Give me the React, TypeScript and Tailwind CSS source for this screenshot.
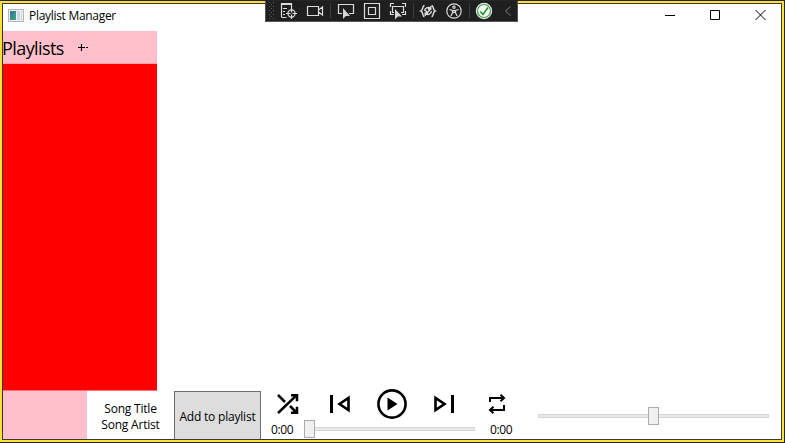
import type { ReactNode } from 'react';

const UI_FONT = "font-['Open_Sans','Noto_Sans',sans-serif]";

function ToolIcon({ children, className = '' }: { children: ReactNode; className?: string }) {
  return (
    <svg width="18" height="18" viewBox="0 0 18 18" fill="none" stroke="#dcdcdc" strokeWidth="1.2" className={`shrink-0 ${className}`}>
      {children}
    </svg>
  );
}

function Separator({ className = '' }: { className?: string }) {
  return <div className={`h-[14px] w-px shrink-0 bg-[#3d3d3d] ${className}`} />;
}

function DebugToolbar() {
  return (
    <div className="absolute left-[265px] top-[-1px] flex h-[22px] w-[253px] items-center border border-t-0 border-[#555555] bg-[#1f1f1f]">
      <svg width="5" height="17" viewBox="0 0 5 17" fill="#5c5c5c" className="ml-[3px] shrink-0">
        {[0, 4, 8, 12, 16].map((y) => (
          <g key={y}>
            <rect x="0" y={y} width="1" height="1" />
            <rect x="4" y={y} width="1" height="1" />
            <rect x="2" y={y + 2} width="1" height="1" />
          </g>
        ))}
      </svg>
      <ToolIcon className="ml-[6px]">
        <path d="M1.5 15V1.5h10V6M1 2.5h11" />
        <path d="M1 2h11" strokeWidth="2" />
        <path d="M3 6.5h4M3 9.5h2M3 12.500h2M1.500 15.500h5" />
        <circle cx="11.500" cy="11.500" r="3.600" />
        <path d="M11.500 6v4.500M11.500 12.500V17M6 11.500h4.500M12.500 11.500H17" />
      </ToolIcon>
      <ToolIcon className="ml-[8px]">
        <path d="M1.500 4.500h11v9h-11z M12.500 8l4-3v8l-4-3" />
      </ToolIcon>
      <Separator className="ml-[6px]" />
      <ToolIcon className="ml-[6px]">
        <path d="M5 11.500H1.500v-9h15v9H12" />
        <path d="M6 6v11l2.800-3H13z" fill="#d6d6d6" stroke="none" />
      </ToolIcon>
      <ToolIcon className="ml-[8px]">
        <path d="M1.500 1.500h15v15h-15zM5.500 5.500h7v7h-7z" />
      </ToolIcon>
      <ToolIcon className="ml-[8px]">
        <path d="M1.500 5V1.500H5M13 1.500h3.500V5M1.500 9v3.500H5M13 12.500h3.500V9" />
        <path d="M5 10.500H3.500v-6h11v6H12" />
        <path d="M6 7v10.500l2.800-3H13z" fill="#d6d6d6" stroke="none" />
      </ToolIcon>
      <Separator className="ml-[6px]" />
      <ToolIcon className="ml-[5px]">
        <path strokeWidth="1.500" d="M5.500 3.500C3 3.500 4.500 8 2 9c2.500 1 1 5.500 3.500 5.500M12.500 3.500C15 3.500 13.500 8 16 9c-2.500 1-1 5.500-3.500 5.500" />
        <path strokeWidth="1.400" d="M11.500 6.500A3.500 3.500 0 0 0 5.600 9M6.500 11.500A3.500 3.500 0 0 0 12.400 9M11.800 4v3H9M6.200 14v-3H9M6.500 8.500l2 2 3.500-4" />
      </ToolIcon>
      <ToolIcon className="ml-[8px]">
        <circle cx="9" cy="9" r="7.200" />
        <circle cx="9" cy="5.200" r="1.100" />
        <path d="M4.500 7.500l3 1v2L6 14M13.500 7.500l-3 1v2L12 14M7.500 8.500h3M7.500 11L9 10l1.500 1" />
      </ToolIcon>
      <Separator className="ml-[6px]" />
      <ToolIcon className="ml-[5px]">
        <circle cx="9" cy="9" r="7.600" fill="#f3f8f3" stroke="#e4e4e4" />
        <circle cx="9" cy="9" r="6.500" stroke="#48a04c" />
        <path d="M5.300 9.500l2.700 3 5-7" stroke="#28902e" strokeWidth="1.600" />
      </ToolIcon>
      <svg width="8" height="12" viewBox="0 0 8 12" fill="none" stroke="#606060" strokeWidth="1.100" className="ml-[11px] shrink-0">
        <path d="M6.500 1.500L1.500 6l5 4.500" />
      </svg>
    </div>
  );
}

function TitleBar() {
  return (
    <header className="flex h-[27px] shrink-0 items-center pl-[5px]">
      <svg width="16" height="14" viewBox="0 0 16 14" className="mb-[3px] shrink-0">
        <defs>
          <linearGradient id="pane" x1="0" y1="0" x2="1" y2="1">
            <stop offset="0" stopColor="#3173a2" />
            <stop offset="1" stopColor="#45a878" />
          </linearGradient>
        </defs>
        <rect x=".5" y=".5" width="15" height="12" fill="#eef0f2" stroke="#b0b6ba" />
        <rect x="2" y="2" width="6" height="9" fill="url(#pane)" />
        <rect x="9" y="2" width="3" height="9" fill="#cbd9df" />
        <rect x="13" y="2" width="1" height="9" fill="#cbd9df" />
      </svg>
      <h1 className="mb-[3px] ml-[5px] whitespace-nowrap text-[12px] leading-4 tracking-[-0.3px] text-black">Playlist Manager</h1>
      <div className="mb-[6px] ml-auto mr-[15px] flex items-center gap-[35px]">
        <svg width="10" height="10" viewBox="0 0 10 10" stroke="#000" fill="none"><path d="M0 5.500h10" /></svg>
        <svg width="10" height="10" viewBox="0 0 10 10" stroke="#000" fill="none"><path d="M.5.500h9v9h-9z" /></svg>
        <svg width="11" height="10" viewBox="0 0 11 10" stroke="#000" fill="none"><path d="M.5 0l10 10M10.500 0l-10 10" /></svg>
      </div>
    </header>
  );
}

function Transport() {
  return (
    <div className="flex w-[241px] shrink-0 flex-col">
      <div className="flex h-[30px] items-center text-black">
        <svg width="22" height="22" viewBox="0 0 22 22" fill="none" stroke="currentColor" strokeWidth="2.500" className="mt-[-4px] ml-[6px]">
          <path d="M1 2l7 7M1 20L20 1.800M13 13l7 7M14 2.200h6v6M14 19.800h6v-6" />
        </svg>
        <svg width="22" height="20" viewBox="0 0 22 20" fill="none" stroke="currentColor" strokeWidth="2.600" className="mt-[-4px] ml-[30px]">
          <path d="M2.500 1v18" strokeWidth="3" />
          <path d="M19.500 4v12L10.500 10z" />
        </svg>
        <svg width="32" height="32" viewBox="0 0 32 32" fill="none" stroke="currentColor" strokeWidth="2.600" className="mt-[-4px] ml-[25px]">
          <circle cx="16" cy="16" r="13.600" />
          <path d="M11.500 9.500v13L21.500 16z" fill="currentColor" stroke="none" />
        </svg>
        <svg width="22" height="20" viewBox="0 0 22 20" fill="none" stroke="currentColor" strokeWidth="2.600" className="mt-[-4px] ml-[25px]">
          <path d="M19.500 1v18" strokeWidth="3" />
          <path d="M2.500 4v12L11.500 10z" />
        </svg>
        <svg width="20" height="20" viewBox="0 0 20 20" fill="none" stroke="currentColor" strokeWidth="2" className="mt-[-4px] ml-[32px]">
          <path d="M3 8V4h14M13.500.800L17 4l-3.500 3.200M17 11v5H3M6.500 12.800L3 16l3.500 3.200" />
        </svg>
      </div>
      <div className="flex h-4 items-center">
        <span className="w-[33px] shrink-0 pt-[2px] text-[12px] leading-4 tracking-[-0.350px]">0:00</span>
        <div className="flex h-[18px] items-center">
          <div className="h-[18px] w-[11px] border border-[#acacac] bg-[#f0f0f0]" />
          <div className="h-1 w-[160px] border border-l-0 border-[#d6d6d6] bg-[#e7eaea]" />
        </div>
        <span className="ml-[15px] pt-[2px] text-[12px] leading-4 tracking-[-0.350px]">0:00</span>
      </div>
    </div>
  );
}

export default function App() {
  return (
    <div className={`relative h-[443px] w-[785px] overflow-hidden border-y border-r border-[#25262b] text-black ${UI_FONT}`}>
      <div className="h-full border-2 border-[#ffe03a]">
        <div className="flex h-full flex-col border border-[#3c3835] bg-white">
          <TitleBar />
          <main className="flex min-h-0 flex-1 flex-col">
            <aside className="flex w-[154px] flex-1 flex-col border-b border-[#ff7078] bg-[#ff0000]">
              <div className="flex h-[33px] items-center border-b border-[#ff9fa8] bg-[#ffc0cb]">
                <h2 className="ml-[-1px] mt-[1px] w-[76px] shrink-0 whitespace-nowrap text-[18px] leading-6 tracking-[-0.580px]">Playlists</h2>
                <svg width="11" height="9" viewBox="0 0 11 9" stroke="#000" fill="none">
                  <path d="M0 4.500h7M3.500 1v7M8 4.500h2" strokeWidth="1.200" />
                </svg>
              </div>
            </aside>
            <footer className="flex h-[48px] shrink-0">
              <div className="w-[84px] shrink-0 bg-[#ffc0cb]" />
              <div className="flex w-[87px] shrink-0 flex-col items-center pt-[10px] text-[12px] leading-4 tracking-[-0.200px]">
                <span className="whitespace-nowrap">Song Title</span>
                <span className="whitespace-nowrap">Song Artist</span>
              </div>
              <button className="w-[87px] shrink-0 whitespace-nowrap border border-b-0 border-[#707070] bg-[#dddddd] pt-[3px] text-[12px] tracking-[-0.200px]">Add to playlist</button>
              <div className="w-[10px] shrink-0" />
              <Transport />
              <div className="ml-[26px] flex h-[50px] items-center">
                <div className="h-1 w-[110px] border border-r-0 border-[#d6d6d6] bg-[#e7eaea]" />
                <div className="h-[18px] w-[11px] border border-[#acacac] bg-[#f0f0f0]" />
                <div className="h-1 w-[110px] border border-l-0 border-[#d6d6d6] bg-[#e7eaea]" />
              </div>
            </footer>
          </main>
        </div>
      </div>
      <DebugToolbar />
    </div>
  );
}
